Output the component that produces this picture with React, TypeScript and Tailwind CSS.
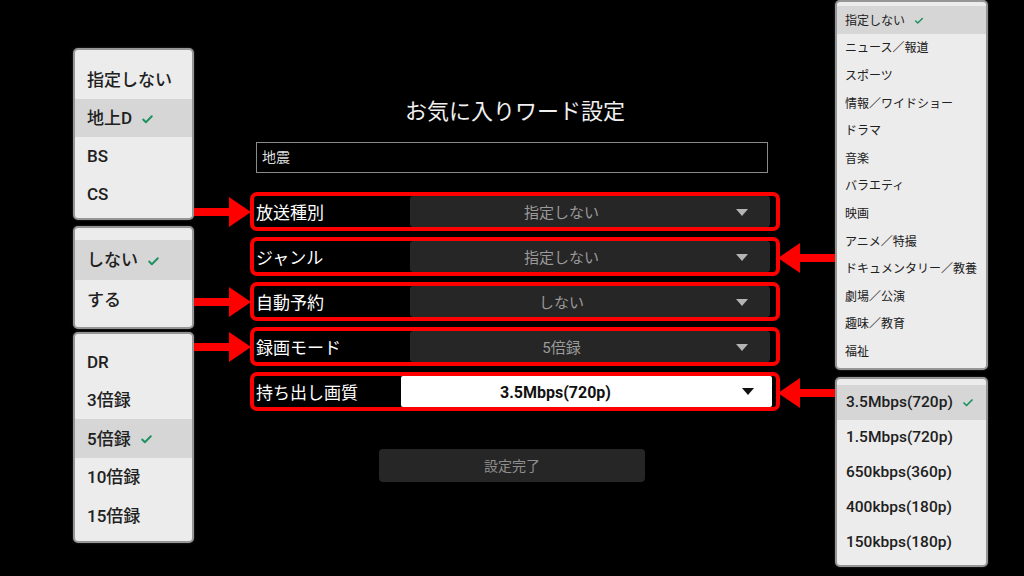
import React from 'react';
import { Check } from 'lucide-react';

const FONT = "font-['Roboto','Noto_Sans_CJK_JP',sans-serif]";

type MenuItem = { label: string; selected?: boolean };

const Caret: React.FC<{ color: string; className?: string }> = ({ color, className }) => (
  <svg width="12" height="7" viewBox="0 0 12 7" className={className}>
    <polygon points="0,0 12,0 6,7" fill={color} />
  </svg>
);

// red callout arrow, pointing right by default
const Arrow: React.FC<{ flip?: boolean; className?: string }> = ({ flip, className }) => (
  <svg width="57" height="30" viewBox="0 0 57 30" className={className}>
    <g transform={flip ? 'translate(57,0) scale(-1,1)' : undefined}>
      <rect x="0" y="11" width="36" height="8" fill="#ff0000" />
      <polygon points="35,0 57,15 35,30" fill="#ff0000" />
    </g>
  </svg>
);

const PopupMenu: React.FC<{
  items: MenuItem[];
  itemClass: string;
  textClass: string;
  checkSize: number;
  className?: string;
}> = ({ items, itemClass, textClass, checkSize, className }) => (
  <div
    className={`bg-[#ececec] border-2 border-[#969696] rounded-[5px] shadow-[0_0_2px_rgba(255,255,255,0.25)] ${className ?? ''}`}
  >
    {items.map((item) => (
      <div
        key={item.label}
        className={`${itemClass} flex items-center ${item.selected ? 'bg-[#d6d6d6]' : ''}`}
      >
        <span className={`${textClass} text-[#202020] whitespace-nowrap translate-y-[1px]`}>
          {item.label}
        </span>
        {item.selected && (
          <Check size={checkSize} strokeWidth={3.5} className="text-[#1d9160] ml-[9px] translate-y-[1px]" />
        )}
      </div>
    ))}
  </div>
);

const SettingRow: React.FC<{ label: string; value: string }> = ({ label, value }) => (
  <div className="h-[39px] border-4 border-[#ff0000] rounded-[7px] flex items-center">
    <div className="w-[156px] pl-[2px] text-[17px] text-white translate-y-[2px]">{label}</div>
    <div className="flex-1 h-full mr-[6px] bg-[#262626] rounded-[3px] flex items-center">
      <span className="flex-1 text-center text-[15px] text-[#9a9a9a] translate-y-[2px]">{value}</span>
      <Caret color="#b4b4b4" className="ml-[23px] mr-[22px] translate-y-[1px]" />
    </div>
  </div>
);

const broadcastItems: MenuItem[] = [
  { label: '指定しない' },
  { label: '地上D', selected: true },
  { label: 'BS' },
  { label: 'CS' },
];

const autoItems: MenuItem[] = [{ label: 'しない', selected: true }, { label: 'する' }];

const modeItems: MenuItem[] = [
  { label: 'DR' },
  { label: '3倍録' },
  { label: '5倍録', selected: true },
  { label: '10倍録' },
  { label: '15倍録' },
];

const genreItems: MenuItem[] = [
  { label: '指定しない', selected: true },
  { label: 'ニュース／報道' },
  { label: 'スポーツ' },
  { label: '情報／ワイドショー' },
  { label: 'ドラマ' },
  { label: '音楽' },
  { label: 'バラエティ' },
  { label: '映画' },
  { label: 'アニメ／特撮' },
  { label: 'ドキュメンタリー／教養' },
  { label: '劇場／公演' },
  { label: '趣味／教育' },
  { label: '福祉' },
];

const qualityItems: MenuItem[] = [
  { label: '3.5Mbps(720p)', selected: true },
  { label: '1.5Mbps(720p)' },
  { label: '650kbps(360p)' },
  { label: '400kbps(180p)' },
  { label: '150kbps(180p)' },
];

export default function App() {
  return (
    <div className={`relative w-[1024px] h-[576px] bg-black overflow-hidden flex ${FONT}`}>
      {/* left option lists */}
      <div className="ml-[73px] w-[121px] pt-[48px] flex flex-col">
        <PopupMenu
          items={broadcastItems}
          itemClass="h-[38px] pl-[12px]"
          textClass="text-[17px] font-medium"
          checkSize={13}
          className="pt-[11px] pb-[5px]"
        />
        <PopupMenu
          items={autoItems}
          itemClass="h-[40px] pl-[12px]"
          textClass="text-[17px] font-medium"
          checkSize={13}
          className="mt-[6px] pt-[12px] pb-[7px]"
        />
        <PopupMenu
          items={modeItems}
          itemClass="h-[38.5px] pl-[12px]"
          textClass="text-[17px] font-medium"
          checkSize={13}
          className="mt-[3px] pt-[8px] pb-[6px]"
        />
      </div>

      {/* settings form */}
      <div className="ml-[56px] w-[530px] pt-[98px] flex flex-col">
        <h1 className="h-[28px] leading-[28px] text-center text-[22px] text-[#f0f0f0] font-normal">
          お気に入りワード設定
        </h1>
        <div className="mt-[16px] ml-[6px] w-[512px] h-[31px] border border-[#8a8a8a] flex items-center px-[5px] text-[14px] text-[#dedede]">
          地震
        </div>
        <div className="mt-[19px] flex flex-col gap-[6px]">
          <SettingRow label="放送種別" value="指定しない" />
          <SettingRow label="ジャンル" value="指定しない" />
          <SettingRow label="自動予約" value="しない" />
          <SettingRow label="録画モード" value="5倍録" />
          <div className="h-[39px] border-4 border-[#ff0000] rounded-[7px] flex items-center">
            <div className="w-[147px] pl-[2px] text-[17px] text-white translate-y-[2px]">持ち出し画質</div>
            <div className="flex-1 h-full mr-[4px] bg-white rounded-[2px] flex items-center">
              <span className="flex-1 text-center text-[16px] font-bold text-[#111] translate-y-[1px]">
                3.5Mbps(720p)
              </span>
              <Caret color="#111111" className="ml-[32px] mr-[18px]" />
            </div>
          </div>
        </div>
        <button className="mt-[38px] ml-[129px] w-[266px] h-[33px] bg-[#262626] rounded-[4px] text-[14px] text-[#8e8e8e]">
          <span className="inline-block translate-y-[1px]">設定完了</span>
        </button>
      </div>

      {/* right option lists */}
      <div className="ml-[55px] w-[153px] flex flex-col">
        <PopupMenu
          items={genreItems}
          itemClass="h-[27.6px] pl-[8px]"
          textClass="text-[12px]"
          checkSize={10}
          className="pt-[4px] pb-[3px]"
        />
        <PopupMenu
          items={qualityItems}
          itemClass="h-[34.8px] pl-[9px]"
          textClass="text-[15.5px] font-medium"
          checkSize={12}
          className="mt-[7px] pt-[6px] pb-[6px]"
        />
      </div>

      {/* callout arrows */}
      <Arrow className="absolute left-[194px] top-[197px]" />
      <Arrow className="absolute left-[194px] top-[287px]" />
      <Arrow className="absolute left-[194px] top-[332px]" />
      <Arrow flip className="absolute left-[778px] top-[243px]" />
      <Arrow flip className="absolute left-[778px] top-[378px]" />
    </div>
  );
}
